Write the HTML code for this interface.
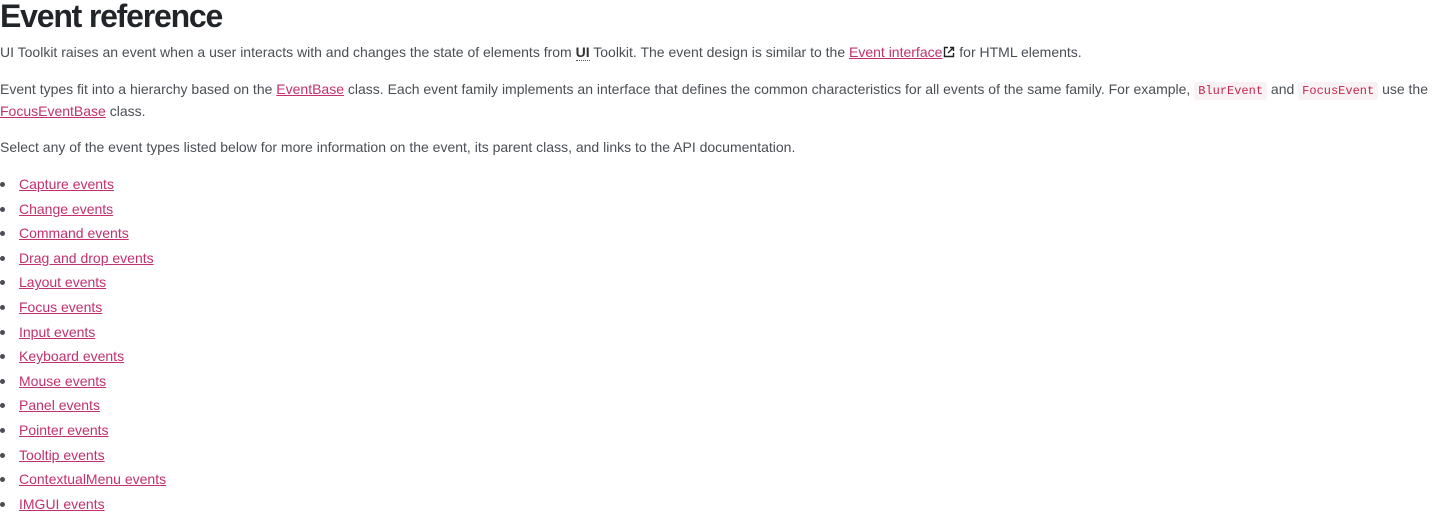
<!DOCTYPE html>
<html><head><meta charset="utf-8"><style>
body{margin:0;background:#fff;font-family:"Liberation Sans",sans-serif;color:#4a4f55;font-size:14px;letter-spacing:0}
h1{position:absolute;left:0;top:-4px;margin:0;font-size:32px;font-weight:bold;color:#212529;letter-spacing:-1.2px;line-height:40px}
p{position:absolute;left:0;margin:0;line-height:22px;white-space:nowrap}
a{color:#c2306e;text-decoration:underline}
code{font-family:"Liberation Mono",monospace;font-size:12px;color:#c7254e;background:#f9f2f4;border-radius:3px;padding:2px 4px;letter-spacing:0;line-height:14px;display:inline-block}
b{color:#333;border-bottom:1px dotted #555}
ul{position:absolute;left:0;top:172px;margin:0;padding:0 0 0 19px;list-style:none}
li{position:relative;line-height:24.6px;height:24.6px}
li:before{content:"";position:absolute;left:-19px;top:10px;width:5px;height:5px;border-radius:50%;background:#4a4f55}
</style></head><body>
<h1>Event reference</h1>
<p style="top:41px">UI Toolkit raises an event when a user interacts with and changes the state of elements from <b>UI</b> Toolkit. The event design is similar to the <a>Event interface</a><svg width="12" height="12" viewBox="0 0 12 12" style="vertical-align:-1px;margin-left:1px"><path d="M5 1.5H1.5v9h9V7M7 1.5h3.5V5M10.5 1.5L5 7" fill="none" stroke="#222" stroke-width="1.4"/></svg> for HTML elements.</p>
<p style="top:78px">Event types fit into a hierarchy based on the <a>EventBase</a> class. Each event family implements an interface that defines the common characteristics for all events of the same family. For example, <code>BlurEvent</code> and <code>FocusEvent</code> use the<br><a>FocusEventBase</a> class.</p>
<p style="top:136px">Select any of the event types listed below for more information on the event, its parent class, and links to the API documentation.</p>
<ul>
<li><a>Capture events</a></li>
<li><a>Change events</a></li>
<li><a>Command events</a></li>
<li><a>Drag and drop events</a></li>
<li><a>Layout events</a></li>
<li><a>Focus events</a></li>
<li><a>Input events</a></li>
<li><a>Keyboard events</a></li>
<li><a>Mouse events</a></li>
<li><a>Panel events</a></li>
<li><a>Pointer events</a></li>
<li><a>Tooltip events</a></li>
<li><a>ContextualMenu events</a></li>
<li><a>IMGUI events</a></li>
</ul>
</body></html>
